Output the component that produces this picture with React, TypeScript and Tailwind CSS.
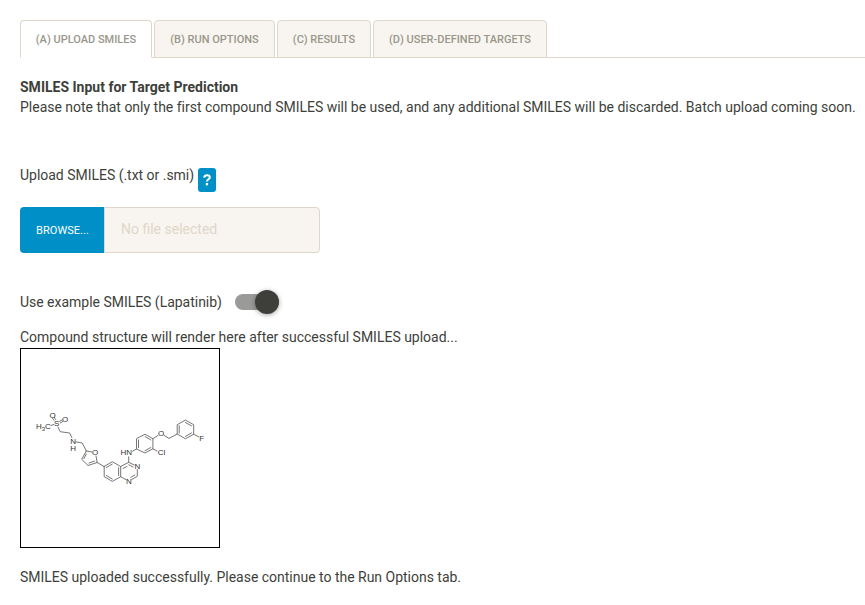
import { useState } from "react";

const tabs = [
  { label: "(A) UPLOAD SMILES", width: "w-[132px]" },
  { label: "(B) RUN OPTIONS", width: "w-[121px]" },
  { label: "(C) RESULTS", width: "w-[94px]" },
  { label: "(D) USER-DEFINED TARGETS", width: "w-[174px]" },
];

function Tabs() {
  const [active, setActive] = useState(0);
  return (
    <nav className="ml-5 flex h-[38px] gap-[2px] border-b border-[#dfd7ca]">
      {tabs.map((tab, i) => (
        <button
          key={tab.label}
          onClick={() => setActive(i)}
          className={`${tab.width} h-[38px] shrink-0 whitespace-nowrap rounded-t-[4px] border border-[#dfd7ca] pt-[2px] text-[11px] font-medium leading-[22px] text-[#98978b] ${
            i === active ? "border-b-white bg-white" : "bg-[#f8f5f0]"
          }`}
        >
          {tab.label}
        </button>
      ))}
    </nav>
  );
}

// Skeletal formula of lapatinib
function Molecule() {
  return (
    <svg className="block h-[198px] w-[198px]" viewBox="21 349 198 198">
      <g fill="none" stroke="#666" strokeWidth="0.9" strokeLinecap="round">
        <path d="M51 425.5 54 424.4M54.2 417.4 55.6 419.5M52.6 418.4 54 420.4M59.5 421.3 62 420M60.2 423 62.6 421.6" />
        <path d="M58 427 60.2 431.7 69.7 433 71.8 437.5M76 441.9 82.3 443 86.3 451" />
        <path d="M86.3 451 92 452M96 456 97.2 462.5 88 465.5 81.7 459.3 86.3 451M86.3 454 83.9 458.6M89 463 94.5 461.1M97.2 462.5 104 466.5" />
        <path d="M104 466.5 112.3 461.7 120.7 466.5V476.7L112.3 481.4 104.2 476.7V466.5M106.2 467.6 112.3 464.1M118.6 467.7V475.5M112.3 479 106.3 475.5" />
        <path d="M120.7 466.5 128.7 462.3 134.2 465M137.3 469.5V476.2L131.8 479.5M125.8 479.6 120.7 476.7M128.7 462.3V456.8M128.8 464.8 133 467M134.8 475 130.8 477.3M123 468.5 127 466.4" />
        <path d="M132.6 451.2 136.5 449V438.7L145 434.2 152.9 438.7V448.8L145 453 136.5 449M138.5 447.7V440M145.1 436.6 150.8 439.9M150.7 447.6 145 450.7M152.9 438.7 158 435.4M152.9 448.8 157 451" />
        <path d="M164 435.3 169 438.4 177.2 434V424.7L185.4 420.1 193.7 424.7V434.2L185.4 438.8 177.2 434M179.2 425.8V433M185.4 422.5 191.5 425.9M191.5 433 185.4 436.4M193.7 434.2 198.6 436.8" />
      </g>
      <g className="font-['Liberation_Sans',sans-serif] text-[8px]" fill="#333" textAnchor="middle">
        <text x="52.6" y="417.5">O</text>
        <text x="65" y="422.3">O</text>
        <text x="56.7" y="426.2">S</text>
        <text x="38.8" y="429.2">H</text>
        <text className="text-[6px]" x="43.4" y="431.2">3</text>
        <text x="47.8" y="429.2">C</text>
        <text x="73.1" y="444">N</text>
        <text x="73.1" y="451.4">H</text>
        <text x="95.2" y="455">O</text>
        <text x="126.2" y="455.3">HN</text>
        <text x="137.3" y="469.1">N</text>
        <text x="128.8" y="483.9">N</text>
        <text x="161" y="436.2">O</text>
        <text x="161.5" y="455.3">Cl</text>
        <text x="201.7" y="441.1">F</text>
      </g>
    </svg>
  );
}

export default function App() {
  const [example, setExample] = useState(true);
  return (
    <main className="h-[605px] overflow-hidden bg-white pt-5 font-[Roboto,sans-serif] text-[14px] leading-5 text-[#3e3f3a]">
      <Tabs />
      <div className="pl-5 pt-[19px]">
        <h1 className="font-bold">SMILES Input for Target Prediction</h1>
        <p className="whitespace-nowrap tracking-[-0.009px]">
          Please note that only the first compound SMILES will be used, and any additional SMILES will be discarded. Batch upload coming soon.
        </p>
        <div className="mt-[48px] flex h-[27px] items-start">
          <label className="w-[178px] whitespace-nowrap tracking-[-0.02px]">Upload SMILES (.txt or .smi)</label>
          <button aria-label="Help" className="mt-[3px] flex h-6 w-[18px] items-center justify-center rounded-[3px] bg-[#0090c8]">
            <svg className="h-3 w-2" viewBox="0 0 8 12" fill="none">
              <path d="M1.1 3.7C1.3 1.9 2.4 1.2 4 1.2c1.7 0 2.8.8 2.8 2.2 0 2-2.8 1.8-2.8 4" stroke="white" strokeWidth="2" />
              <path d="M2.8 9h2.3v2.3H2.8z" fill="white" />
            </svg>
          </button>
        </div>
        <div className="mt-[15px] flex h-[46px] w-[300px]">
          <button className="w-[84px] rounded-l-[4px] bg-[#0090c8] pl-[1px] pt-[2px] text-[11px] font-normal leading-[22px] tracking-[0.06px] text-white">BROWSE...</button>
          <div className="flex flex-1 items-center rounded-r-[4px] border border-[#dfd7ca] bg-[#f8f5f0] pb-[2px] pl-4 text-[#dfd7ca]">No file selected</div>
        </div>
        <div className="mt-[37px] flex h-6 items-center">
          <span className="w-[215px] tracking-[-0.02px]">Use example SMILES (Lapatinib)</span>
          <button
            role="switch"
            aria-label="Use example SMILES"
            aria-checked={example}
            onClick={() => setExample(!example)}
            className={`flex h-4 w-11 items-center rounded-full bg-[#9a9a98] ${example ? "justify-end" : "justify-start"}`}
          >
            <span className="size-6 rounded-full bg-[#3e3f3a] shadow-[0_1px_5px_rgba(0,0,0,0.35)]" />
          </button>
        </div>
        <p className="mt-[13px] tracking-[-0.012px]">Compound structure will render here after successful SMILES upload...</p>
        <div className="mt-[1px] size-[200px] border border-black">
          <Molecule />
        </div>
        <p className="mt-[19px] tracking-[-0.012px]">SMILES uploaded successfully. Please continue to the Run Options tab.</p>
      </div>
    </main>
  );
}
